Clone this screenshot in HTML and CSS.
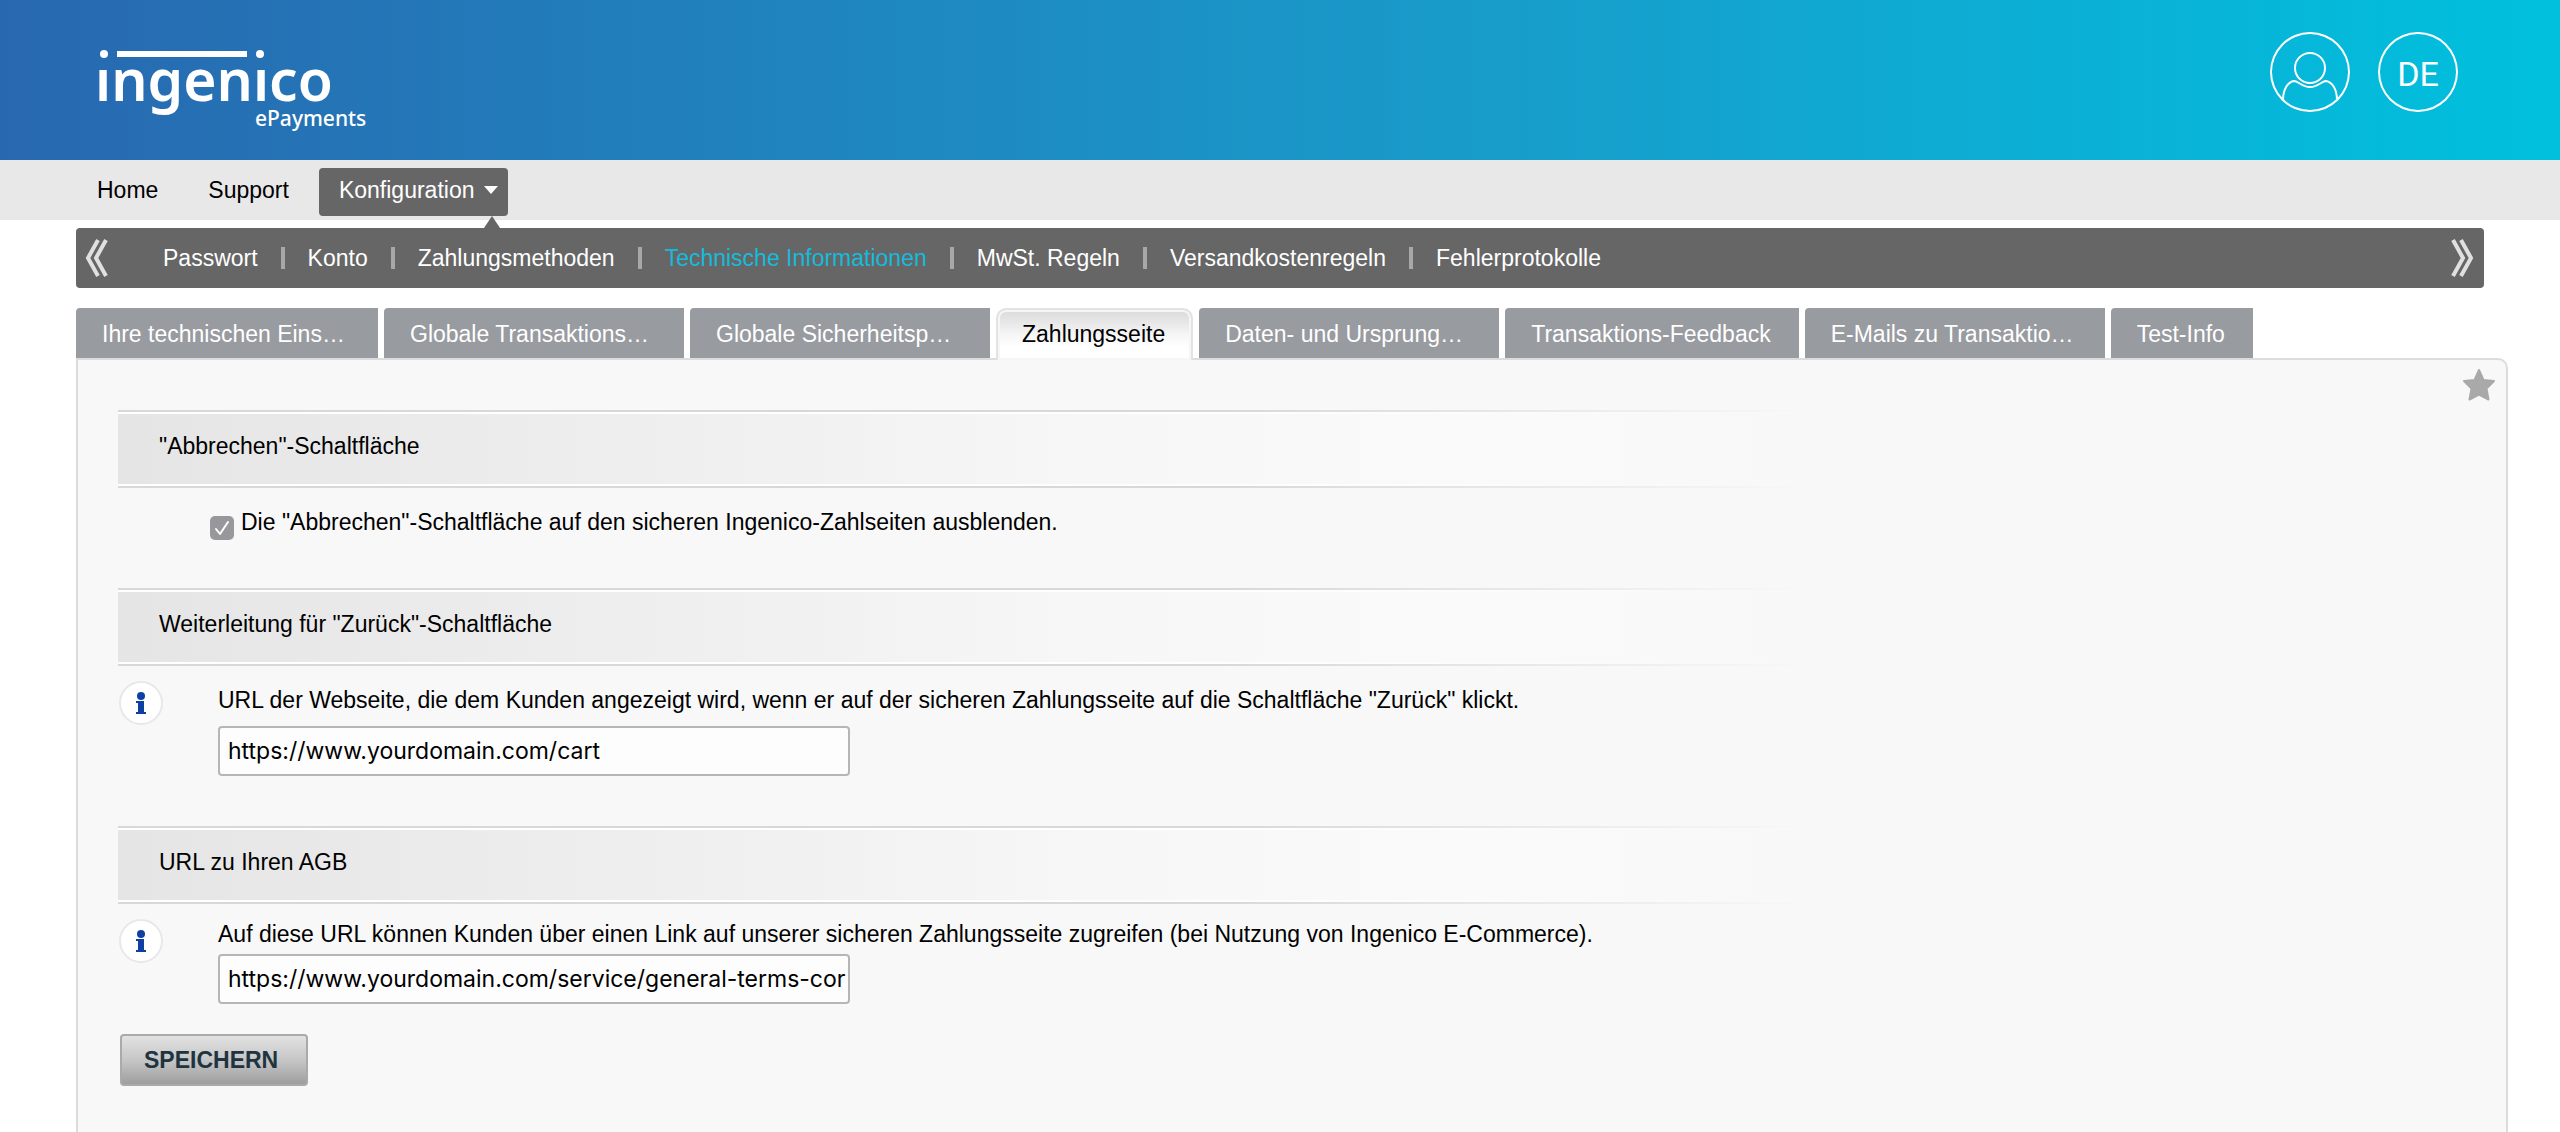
FILE: index.html
```html
<!DOCTYPE html>
<html lang="de">
<head>
<meta charset="utf-8">
<title>Ingenico ePayments – Technische Informationen</title>
<meta name="viewport" content="width=device-width, initial-scale=1">
<link rel="stylesheet" href="styles.css">
</head>
<body>
<header class="masthead">
  <a class="logo" href="#" aria-label="ingenico ePayments">
    <svg width="300" height="112" viewBox="0 0 300 112">
      <defs><clipPath id="below-dots"><rect x="0" y="44" width="300" height="68"/></clipPath></defs>
      <text class="logo-name" x="5" y="77" clip-path="url(#below-dots)">ingenico</text>
      <g fill="#fff">
        <circle cx="14" cy="30" r="4"/>
        <rect x="27" y="27" width="130" height="6"/>
        <circle cx="170" cy="30" r="4"/>
      </g>
      <text class="logo-sub" x="165" y="102">ePayments</text>
    </svg>
  </a>
  <div class="account">
    <button class="round" type="button" aria-label="Benutzerkonto">
      <svg width="80" height="80" viewBox="0 0 80 80" fill="none" stroke="#fff" stroke-width="2">
        <circle cx="40" cy="36" r="15"/>
        <path d="M13 68C13 57 18 50 24 49C28 49 32 55 40 55C48 55 52 49 56 49C62 50 67 57 67 68"/>
      </svg>
    </button>
    <button class="round language" type="button">DE</button>
  </div>
</header>

<nav class="mainnav" aria-label="Hauptmenü">
  <a href="#">Home</a>
  <a href="#">Support</a>
  <a class="current" href="#">Konfiguration
    <svg width="14" height="8" viewBox="0 0 14 8"><path d="M0 0H14L7 8Z" fill="#fff"/></svg>
  </a>
</nav>

<main class="page">
  <nav class="subnav" aria-label="Konfiguration">
    <button class="scroll" type="button" aria-label="Zurück">
      <svg width="24" height="38" viewBox="0 0 24 38" fill="none" stroke="#e0e0e0" stroke-width="4"><path d="M13 1L3 19L13 37M21 1L11 19L21 37"/></svg>
    </button>
    <ul class="sublinks">
      <li><a href="#">Passwort</a></li>
      <li><a href="#">Konto</a></li>
      <li><a href="#">Zahlungsmethoden</a></li>
      <li><a class="selected" href="#">Technische Informationen</a></li>
      <li><a href="#">MwSt. Regeln</a></li>
      <li><a href="#">Versandkostenregeln</a></li>
      <li><a href="#">Fehlerprotokolle</a></li>
    </ul>
    <button class="scroll" type="button" aria-label="Weiter">
      <svg width="24" height="38" viewBox="0 0 24 38" fill="none" stroke="#e0e0e0" stroke-width="4"><path d="M3 1L13 19L3 37M11 1L21 19L11 37"/></svg>
    </button>
  </nav>

  <nav class="tabs" aria-label="Technische Informationen">
    <a class="wide" href="#">Ihre technischen Eins…</a>
    <a class="wide" href="#">Globale Transaktions…</a>
    <a class="wide" href="#">Globale Sicherheitsp…</a>
    <a class="active" href="#">Zahlungsseite</a>
    <a class="wide" href="#">Daten- und Ursprung…</a>
    <a href="#">Transaktions-Feedback</a>
    <a class="wide" href="#">E-Mails zu Transaktio…</a>
    <a href="#">Test-Info</a>
  </nav>

  <form class="panel">
    <button class="favourite" type="button" aria-label="Favorit">
      <svg width="34" height="34" viewBox="0 0 34 34"><path d="M17 2L21.500 12L32 13L24.500 20.500L26.500 31.500L17 26.500L7.500 31.500L9.500 20.500L2 13L12.500 12Z" fill="#a9a9a9" stroke="#a9a9a9" stroke-width="2" stroke-linejoin="round"/></svg>
    </button>

    <section class="group">
      <h2>"Abbrechen"-Schaltfläche</h2>
      <div class="option">
        <input type="checkbox" id="hide-cancel" checked>
        <label for="hide-cancel">Die "Abbrechen"-Schaltfläche auf den sicheren Ingenico-Zahlseiten ausblenden.</label>
      </div>
    </section>

    <section class="group">
      <h2>Weiterleitung für "Zurück"-Schaltfläche</h2>
      <div class="entry">
        <button class="info" type="button" aria-label="Hilfe">
          <svg width="46" height="46" viewBox="0 0 46 46"><circle cx="23" cy="23" r="21" fill="#fff" stroke="#e8e8e8" stroke-width="2"/><g fill="#0e3fa3"><circle cx="23" cy="16" r="4"/><path d="M18 21H26V32H28V34H18V32H20V23H18Z"/></g></svg>
        </button>
        <div class="field">
          <label for="back-url">URL der Webseite, die dem Kunden angezeigt wird, wenn er auf der sicheren Zahlungsseite auf die Schaltfläche "Zurück" klickt.</label>
          <input type="text" id="back-url" value="https://www.yourdomain.com/cart">
        </div>
      </div>
    </section>

    <section class="group">
      <h2>URL zu Ihren AGB</h2>
      <div class="entry">
        <button class="info" type="button" aria-label="Hilfe">
          <svg width="46" height="46" viewBox="0 0 46 46"><circle cx="23" cy="23" r="21" fill="#fff" stroke="#e8e8e8" stroke-width="2"/><g fill="#0e3fa3"><circle cx="23" cy="16" r="4"/><path d="M18 21H26V32H28V34H18V32H20V23H18Z"/></g></svg>
        </button>
        <div class="field compact">
          <label for="terms-url">Auf diese URL können Kunden über einen Link auf unserer sicheren Zahlungsseite zugreifen (bei Nutzung von Ingenico E-Commerce).</label>
          <input type="text" id="terms-url" value="https://www.yourdomain.com/service/general-terms-cor">
        </div>
      </div>
    </section>

    <button class="save" type="submit">SPEICHERN</button>
  </form>
</main>
</body>
</html>
```
FILE: styles.css
```css
* {
  box-sizing: border-box;
}

body {
  display: flex;
  flex-direction: column;
  min-height: 100vh;
  margin: 0;
  background: #fff;
  color: #000;
  font: 23px/28px "Liberation Sans", Arial, sans-serif;
}

a {
  color: inherit;
  text-decoration: none;
}

button {
  padding: 0;
  border: 0;
  background: none;
  color: inherit;
  font: inherit;
  cursor: pointer;
}

svg {
  display: block;
}

/* Header */

.masthead {
  display: flex;
  justify-content: space-between;
  align-items: flex-start;
  height: 160px;
  padding: 24px 102px 0 90px;
  background: linear-gradient(90deg, #2868b0, #189cca 58%, #00c0de);
  color: #fff;
}

.logo-name,
.logo-sub {
  fill: #fff;
  font-family: "Noto Sans", sans-serif;
}

.logo-name {
  font-size: 57px;
  font-weight: 600;
}

.logo-sub {
  font-size: 21px;
  font-weight: 500;
}

.account {
  display: flex;
  gap: 28px;
  padding-top: 8px;
}

.round {
  width: 80px;
  height: 80px;
  border-radius: 50%;
  box-shadow: inset 0 0 0 2px #fff;
}

.language {
  padding-top: 4px;
  font: 400 34px/76px Roboto, sans-serif;
}

/* Navigation */

.mainnav {
  display: flex;
  align-items: flex-start;
  height: 60px;
  padding: 8px 77px 0;
  background: #e8e8e8;
}

.mainnav a {
  display: flex;
  align-items: center;
  gap: 10px;
  height: 48px;
  padding: 0 10px 4px 20px;
}

.mainnav a + a {
  margin-left: 20px;
}

.mainnav .current {
  position: relative;
  border-radius: 4px;
  background: #666;
  color: #fff;
}

.mainnav .current::after {
  content: "";
  position: absolute;
  right: 8px;
  bottom: -12px;
  border: 8px solid transparent;
  border-top: 0;
  border-bottom: 12px solid #666;
}

.page {
  display: flex;
  flex: 1;
  flex-direction: column;
  padding: 8px 52px 0 76px;
}

.subnav {
  display: flex;
  align-items: center;
  height: 60px;
  margin-right: 24px;
  padding: 0 10px 0 9px;
  border-radius: 4px;
  background: #666;
  color: #fff;
}

.sublinks {
  display: flex;
  flex: 1;
  margin: 0;
  padding: 0 54px;
  list-style: none;
}

.sublinks li {
  display: flex;
  align-items: center;
}

.sublinks li + li::before {
  content: "";
  width: 4px;
  height: 22px;
  margin: 0 23px;
  background: #a8a8a8;
}

.sublinks .selected {
  color: #16bbdb;
}

.tabs {
  display: flex;
  gap: 6px;
  margin-top: 20px;
}

.tabs a {
  height: 50px;
  padding: 0 28px 0 26px;
  border-top-left-radius: 4px;
  background: #989ba0;
  color: #fff;
  line-height: 52px;
  white-space: nowrap;
}

.tabs .wide {
  flex: 0 0 300px;
}

.tabs .wide:first-child {
  flex-basis: 302px;
}

.tabs .active {
  position: relative;
  height: 52px;
  margin-bottom: -2px;
  padding: 0 26px 0 24px;
  border: 2px solid #e2e2e2;
  border-bottom: 0;
  border-radius: 10px 10px 0 0;
  box-shadow: inset 0 0 0 2px #f6f6f6;
  background: linear-gradient(#dbd9db, #f6f6f6 50%, #fff 75%);
  color: #000;
  line-height: 48px;
  z-index: 1;
}

/* Form panel */

.panel {
  position: relative;
  display: flex;
  flex: 1;
  flex-direction: column;
  align-items: flex-start;
  padding: 50px 40px 44px;
  border: 2px solid #dcdcdc;
  border-bottom: 0;
  border-top-right-radius: 10px;
  background: #f8f8f8;
}

.favourite {
  position: absolute;
  top: 8px;
  right: 10px;
}

.group {
  width: 100%;
}

.group h2 {
  width: 72%;
  height: 78px;
  margin: 0;
  padding: 22px 41px;
  background:
    linear-gradient(90deg, #d8d8d8, #d8d8d8 65%, #f8f8f8) 0 0 / 100% 2px no-repeat,
    linear-gradient(90deg, #d8d8d8, #d8d8d8 65%, #f8f8f8) 0 100% / 100% 2px no-repeat,
    linear-gradient(90deg, #fff, #fff 65%, #f8f8f8) 0 2px / 100% 2px no-repeat,
    linear-gradient(90deg, #fff, #fff 65%, #f8f8f8) 0 74px / 100% 2px no-repeat,
    linear-gradient(90deg, #e5e5e5, #f1f1f1 40%, #f7f7f7 58%, #fafafa 80%, #f8f8f8);
  font-size: 23px;
  font-weight: 400;
}

.option {
  display: flex;
  align-items: flex-start;
  gap: 7px;
  padding: 20px 0 48px 92px;
}

.option input {
  width: 24px;
  height: 24px;
  margin: 8px 0 0;
  border-radius: 5px;
  appearance: none;
  background: #98979c url("data:image/svg+xml,%3Csvg xmlns='http://www.w3.org/2000/svg' viewBox='0 0 24 24'%3E%3Cpath d='M6 13L10 18L18 6' fill='none' stroke='white' stroke-width='2' stroke-linecap='round' stroke-linejoin='round'/%3E%3C/svg%3E");
}

.entry {
  display: grid;
  grid-template-columns: 46px 1fr;
  align-items: start;
  column-gap: 54px;
  padding-top: 14px;
}

.field {
  display: flex;
  flex-direction: column;
  align-items: flex-start;
  gap: 12px;
  padding: 6px 0 50px;
}

.compact {
  gap: 6px;
  padding: 2px 0 30px;
}

.field input {
  width: 632px;
  max-width: 100%;
  height: 50px;
  padding: 0 0 0 8px;
  border: 2px solid #b4b6b8;
  border-radius: 4px;
  background: #fdfdfd;
  color: #000;
  font: 23px Inter, sans-serif;
}

.save {
  width: 188px;
  height: 52px;
  margin-left: 2px;
  padding: 0 22px;
  border: 2px solid #aaa;
  border-radius: 4px;
  background: linear-gradient(#e2e2e2, #c6c6c6 50%, #9e9e9e);
  color: #20343f;
  font-weight: 700;
  text-align: left;
}
```
